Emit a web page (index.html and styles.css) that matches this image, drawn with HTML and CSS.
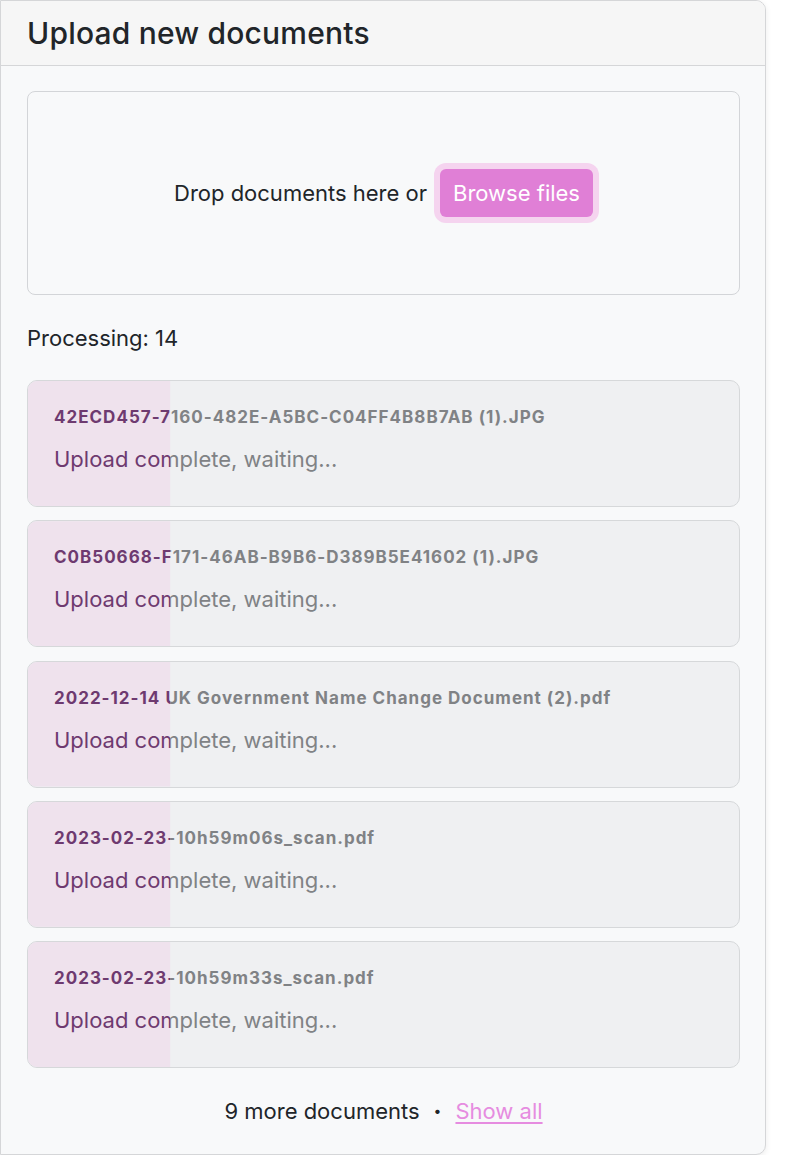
FILE: index.html
```html
<!DOCTYPE html>
<html lang="en">
<head>
<meta charset="utf-8">
<title>Upload new documents</title>
<link rel="stylesheet" href="styles.css">
</head>
<body>
<section class="card">
  <header class="card-header">
    <h1 class="title">Upload new documents</h1>
  </header>
  <div class="card-body">
    <div class="dropzone">
      <span class="drop-text">Drop documents here or</span>
      <button class="browse" type="button">Browse files</button>
    </div>
    <p class="processing">Processing: 14</p>
    <ul class="items">
      <li class="item">
        <div class="item-content"><div class="fname">42ECD457-7160-482E-A5BC-C04FF4B8B7AB (1).JPG</div><div class="status">Upload complete, waiting...</div></div>
        <div class="item-progress" style="clip-path: inset(0 80% 0 0)"><div class="item-content"><div class="fname">42ECD457-7160-482E-A5BC-C04FF4B8B7AB (1).JPG</div><div class="status">Upload complete, waiting...</div></div></div>
      </li>
      <li class="item">
        <div class="item-content"><div class="fname">C0B50668-F171-46AB-B9B6-D389B5E41602 (1).JPG</div><div class="status">Upload complete, waiting...</div></div>
        <div class="item-progress" style="clip-path: inset(0 80% 0 0)"><div class="item-content"><div class="fname">C0B50668-F171-46AB-B9B6-D389B5E41602 (1).JPG</div><div class="status">Upload complete, waiting...</div></div></div>
      </li>
      <li class="item">
        <div class="item-content"><div class="fname">2022-12-14 UK Government Name Change Document (2).pdf</div><div class="status">Upload complete, waiting...</div></div>
        <div class="item-progress" style="clip-path: inset(0 80% 0 0)"><div class="item-content"><div class="fname">2022-12-14 UK Government Name Change Document (2).pdf</div><div class="status">Upload complete, waiting...</div></div></div>
      </li>
      <li class="item">
        <div class="item-content"><div class="fname">2023-02-23-10h59m06s_scan.pdf</div><div class="status">Upload complete, waiting...</div></div>
        <div class="item-progress" style="clip-path: inset(0 80% 0 0)"><div class="item-content"><div class="fname">2023-02-23-10h59m06s_scan.pdf</div><div class="status">Upload complete, waiting...</div></div></div>
      </li>
      <li class="item">
        <div class="item-content"><div class="fname">2023-02-23-10h59m33s_scan.pdf</div><div class="status">Upload complete, waiting...</div></div>
        <div class="item-progress" style="clip-path: inset(0 80% 0 0)"><div class="item-content"><div class="fname">2023-02-23-10h59m33s_scan.pdf</div><div class="status">Upload complete, waiting...</div></div></div>
      </li>
    </ul>
    <div class="more">
      <span>9 more documents</span>
      <span class="dot">•</span>
      <a class="show-all" href="#">Show all</a>
    </div>
  </div>
</section>
</body>
</html>
```

FILE: styles.css
```css
* { box-sizing: border-box; }

html, body {
  margin: 0;
  padding: 0;
  background: #ffffff;
}

body {
  font-family: Inter, "Noto Sans", "Liberation Sans", sans-serif;
  color: #212529;
  width: 790px;
}

.card {
  width: 766px;
  border: 1px solid #d5d6d8;
  border-radius: 0 10px 10px 0;
  background: #f8f9fa;
  box-shadow: 0 2px 6px rgba(0, 0, 0, 0.08);
  overflow: hidden;
}

.card-header {
  height: 65px;
  background: #f6f6f6;
  border-bottom: 1px solid #d5d6d8;
  padding: 0 26px;
  display: flex;
  align-items: center;
}

.title {
  margin: 0;
  font-size: 30px;
  font-weight: 500;
  letter-spacing: 0.2px;
  color: #212529;
}

.card-body {
  padding: 25px 25px 28px 26px;
}

.dropzone {
  height: 204px;
  border: 1px solid #d3d5d8;
  border-radius: 8px;
  display: flex;
  align-items: center;
  justify-content: center;
  gap: 13px;
  font-size: 22px;
}

.drop-text {
  color: #212529;
}

.browse {
  font-family: inherit;
  font-size: 22px;
  color: #ffffff;
  background: #e07fd6;
  border: none;
  border-radius: 6px;
  height: 48px;
  padding: 0 13px;
  box-shadow: 0 0 0 6px #f5d4ef;
}

.processing {
  margin: 28px 0 27px;
  font-size: 22px;
  line-height: 30px;
  color: #212529;
}

.items {
  list-style: none;
  margin: 0;
  padding: 0;
  display: flex;
  flex-direction: column;
  gap: 13.25px;
}

.item {
  position: relative;
  height: 127px;
  border: 1px solid #d6d8da;
  border-radius: 10px;
  background: #eff0f2;
  overflow: hidden;
}

.item-content {
  padding: 24px 26px 0;
  color: #808285;
  white-space: nowrap;
}

.fname {
  font-size: 17px;
  font-weight: 700;
  line-height: 24px;
  letter-spacing: 1px;
}

.status {
  margin-top: 15px;
  font-size: 22px;
  line-height: 30px;
}

.item-progress {
  position: absolute;
  inset: 0;
  background: #efe2ed;
}

.item-progress .item-content {
  color: #6e3a70;
}

.more {
  margin-top: 28px;
  display: flex;
  justify-content: center;
  align-items: center;
  gap: 12px;
  font-size: 22px;
  line-height: 30px;
  color: #212529;
}

.dot {
  font-size: 14px;
  margin: 0 2px;
}

.show-all {
  color: #e68ce0;
  text-decoration: underline;
  text-underline-offset: 3px;
}
```
